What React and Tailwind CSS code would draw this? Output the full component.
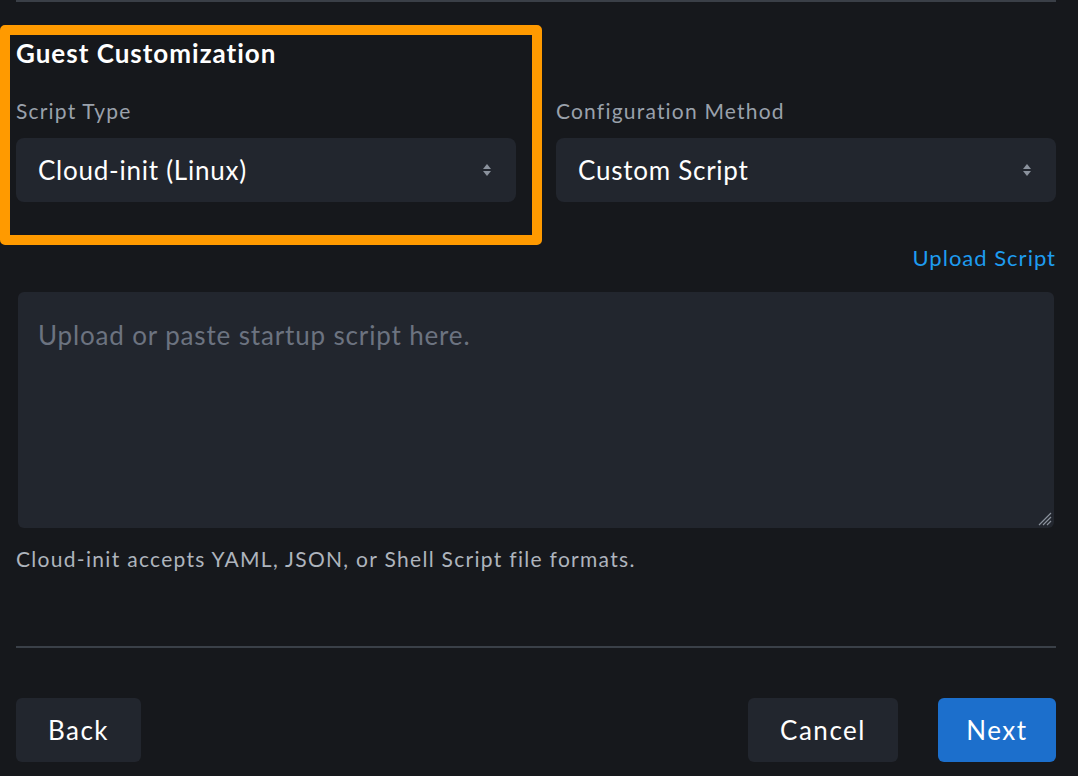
import { useState } from 'react'

function SortArrows() {
  return (
    <svg width="10" height="16" viewBox="0 0 10 16" className="shrink-0">
      <path d="M5 2 L9 7 H1 Z" fill="#8a919c" />
      <path d="M5 14 L9 9 H1 Z" fill="#8a919c" />
    </svg>
  )
}

function SelectBox({ value }) {
  return (
    <div className="flex items-center justify-between h-16 rounded-lg bg-[#22262e] pl-[22px] pr-[24px]">
      <span className="text-[26px] tracking-[0.75px] text-white">{value}</span>
      <SortArrows />
    </div>
  )
}

export default function App() {
  const [script, setScript] = useState('')

  return (
    <div
      className="relative min-h-[776px] bg-[#16181c] pl-4 pr-[22px]"
      style={{ fontFamily: 'Lato, "Open Sans", sans-serif' }}
    >
      <div className="h-[2px] bg-[#3a3f47]"></div>

      <h2 className="mt-[35px] text-[26px] leading-8 font-bold tracking-[1px] text-white">
        Guest Customization
      </h2>

      <div className="mt-7 grid grid-cols-2 gap-10">
        <div>
          <label className="block text-[21px] leading-7 tracking-[1.2px] text-[#9aa1ab]">
            Script Type
          </label>
          <div className="mt-[13px]">
            <SelectBox value="Cloud-init (Linux)" />
          </div>
        </div>
        <div>
          <label className="block text-[21px] leading-7 tracking-[1.2px] text-[#9aa1ab]">
            Configuration Method
          </label>
          <div className="mt-[13px]">
            <SelectBox value="Custom Script" />
          </div>
        </div>
      </div>

      <div className="mt-[42px] flex justify-end">
        <a className="text-[22px] leading-7 tracking-[1px] text-[#1e9cf0]">Upload Script</a>
      </div>

      <div className="relative mt-5 ml-[2px] w-[1036px]">
        <textarea
          value={script}
          onChange={(e) => setScript(e.target.value)}
          placeholder="Upload or paste startup script here."
          className="block h-[236px] w-full resize-none rounded-md bg-[#22262e] px-5 py-[27px] text-[26px] leading-8 tracking-[0.85px] text-white placeholder:text-[#6c7380] outline-none"
        ></textarea>
        {/* resize grip */}
        <svg
          width="14"
          height="14"
          viewBox="0 0 14 14"
          className="pointer-events-none absolute bottom-[2px] right-[2px]"
        >
          <path d="M1 13 L13 1 M5 13 L13 5 M9 13 L13 9" stroke="#8a919c" strokeWidth="1.2" />
        </svg>
      </div>

      <p className="mt-[17px] text-[21px] leading-7 tracking-[1.3px] text-[#aeb4bd]">
        Cloud-init accepts YAML, JSON, or Shell Script file formats.
      </p>

      <div className="mt-[73px] h-[2px] bg-[#3a4048]"></div>

      <div className="mt-[50px] flex items-center">
        <button className="h-16 w-[125px] rounded-md bg-[#22262e] text-[26px] tracking-[1.5px] text-white">
          Back
        </button>
        <div className="ml-auto flex gap-10">
          <button className="h-16 w-[150px] rounded-md bg-[#22262e] text-[26px] tracking-[1.5px] text-white">
            Cancel
          </button>
          <button className="h-16 w-[118px] rounded-md bg-[#1c6fcc] text-[26px] tracking-[1.5px] text-white">
            Next
          </button>
        </div>
      </div>

      {/* highlight annotation */}
      <div className="pointer-events-none absolute left-0 top-[25px] h-[220px] w-[542px] rounded-[5px] border-[10px] border-[#ff9a00]"></div>
    </div>
  )
}
